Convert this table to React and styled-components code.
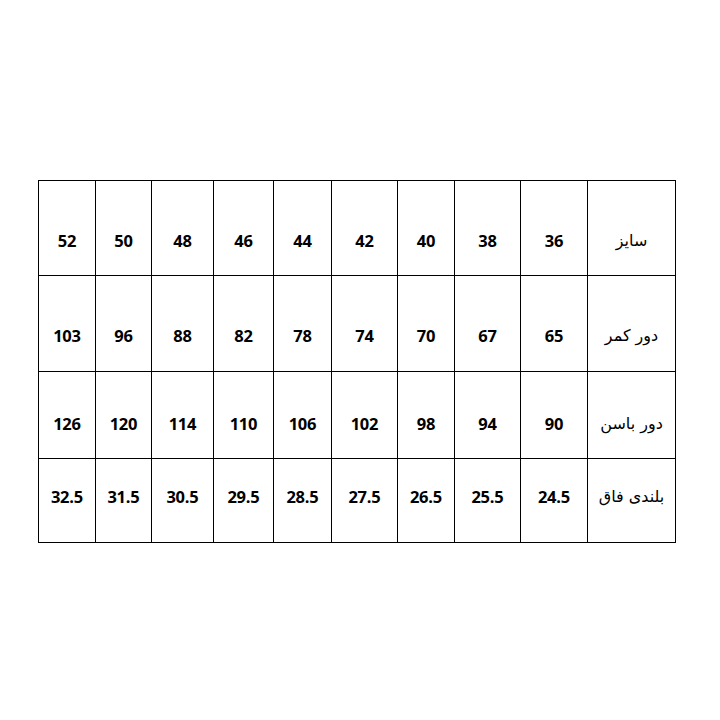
import React from 'react';
import styled, {createGlobalStyle} from 'styled-components';

const GlobalStyle = createGlobalStyle`
  html, body {
    margin: 0;
    padding: 0;
    background: #fff;
  }
`;

const Page = styled.div`
  width: 720px;
  height: 720px;
  box-sizing: border-box;
  padding: 180px 0 0 38px;
  background: #fff;
`;

const SizeTable = styled.table`
  border-collapse: collapse;
  table-layout: fixed;
  width: 638px;
  color: #000;
`;

const Row = styled.tr`
  height: ${props => props.$height}px;
`;

const Cell = styled.td`
  border: 1px solid #000;
  padding: ${props => props.$shift > 0 ? `${props.$shift * 2}px 0 0` : `0 0 ${-props.$shift * 2}px`};
  text-align: center;
  vertical-align: middle;
  font-family: "Open Sans", "Liberation Sans", sans-serif;
  font-weight: 700;
  font-size: 16.5px;
  letter-spacing: -0.2px;
`;

const LabelCell = styled(Cell)`
  font-family: "DejaVu Sans", "Noto Sans", sans-serif;
  font-weight: 400;
  font-size: 16px;
  direction: rtl;
`;

const colWidths = [57, 56, 62, 60, 58, 66, 57, 66, 67, 88];

const rows = [
    {label: 'سایز', height: 95, shift: 12, values: ['52', '50', '48', '46', '44', '42', '40', '38', '36']},
    {label: 'دور کمر', height: 96, shift: 12, values: ['103', '96', '88', '82', '78', '74', '70', '67', '65']},
    {label: 'دور باسن', height: 87, shift: 8, values: ['126', '120', '114', '110', '106', '102', '98', '94', '90']},
    {label: 'بلندی فاق', height: 84, shift: -4, values: ['32.5', '31.5', '30.5', '29.5', '28.5', '27.5', '26.5', '25.5', '24.5']},
];

const App = () => {
    return <>
        <GlobalStyle/>
        <Page>
            <SizeTable>
                <colgroup>
                    {colWidths.map((w, i) => <col key={i} style={{width: w}}/>)}
                </colgroup>
                <tbody>
                {rows.map((row) => (
                    <Row key={row.label} $height={row.height}>
                        {row.values.map((v, i) => <Cell key={i} $shift={row.shift}>{v}</Cell>)}
                        <LabelCell $shift={row.shift}>{row.label}</LabelCell>
                    </Row>
                ))}
                </tbody>
            </SizeTable>
        </Page>
    </>;
};

export default App;
